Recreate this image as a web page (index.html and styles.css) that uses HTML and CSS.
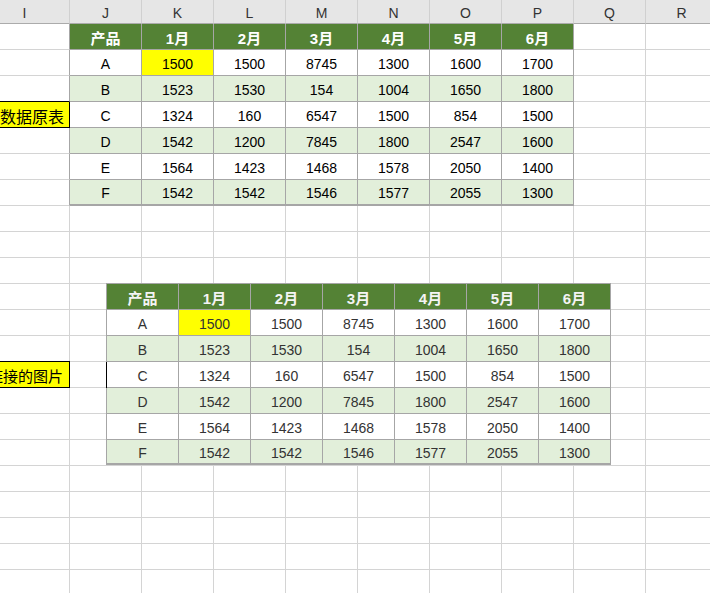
FILE: index.html
```html
<!DOCTYPE html>
<html lang="zh-CN">
<head>
<meta charset="utf-8">
<title>数据原表</title>
<link rel="stylesheet" href="styles.css">
</head>
<body>
<div class="sheet">
  <div class="row colhead">
    <div class="c first">I</div><div class="c">J</div><div class="c">K</div><div class="c">L</div><div class="c">M</div><div class="c">N</div><div class="c">O</div><div class="c">P</div><div class="c">Q</div><div class="c">R</div>
  </div>
  <div class="row">
    <div class="c edge"></div>
    <div class="c t th">产品</div><div class="c t th">1月</div><div class="c t th">2月</div><div class="c t th">3月</div><div class="c t th">4月</div><div class="c t th">5月</div><div class="c t th">6月</div>
    <div class="c"></div><div class="c"></div>
  </div>
  <div class="row">
    <div class="c edge"></div>
    <div class="c t">A</div><div class="c t hl">1500</div><div class="c t">1500</div><div class="c t">8745</div><div class="c t">1300</div><div class="c t">1600</div><div class="c t">1700</div>
    <div class="c"></div><div class="c"></div>
  </div>
  <div class="row">
    <div class="c edge lbl-top"></div>
    <div class="c t alt">B</div><div class="c t alt">1523</div><div class="c t alt">1530</div><div class="c t alt">154</div><div class="c t alt">1004</div><div class="c t alt">1650</div><div class="c t alt">1800</div>
    <div class="c"></div><div class="c"></div>
  </div>
  <div class="row">
    <div class="c label">数据原表</div>
    <div class="c t">C</div><div class="c t">1324</div><div class="c t">160</div><div class="c t">6547</div><div class="c t">1500</div><div class="c t">854</div><div class="c t">1500</div>
    <div class="c"></div><div class="c"></div>
  </div>
  <div class="row">
    <div class="c edge"></div>
    <div class="c t alt">D</div><div class="c t alt">1542</div><div class="c t alt">1200</div><div class="c t alt">7845</div><div class="c t alt">1800</div><div class="c t alt">2547</div><div class="c t alt">1600</div>
    <div class="c"></div><div class="c"></div>
  </div>
  <div class="row">
    <div class="c edge"></div>
    <div class="c t">E</div><div class="c t">1564</div><div class="c t">1423</div><div class="c t">1468</div><div class="c t">1578</div><div class="c t">2050</div><div class="c t">1400</div>
    <div class="c"></div><div class="c"></div>
  </div>
  <div class="row">
    <div class="c edge"></div>
    <div class="c t alt last">F</div><div class="c t alt last">1542</div><div class="c t alt last">1542</div><div class="c t alt last">1546</div><div class="c t alt last">1577</div><div class="c t alt last">2055</div><div class="c t alt last">1300</div>
    <div class="c"></div><div class="c"></div>
  </div>
  <div class="lower">
    <div class="c label label-lower">链接的图片</div>
  </div>

  <div class="pic">
    <div class="prow">
      <div class="c t th">产品</div><div class="c t th">1月</div><div class="c t th">2月</div><div class="c t th">3月</div><div class="c t th">4月</div><div class="c t th">5月</div><div class="c t th">6月</div>
    </div>
    <div class="prow">
      <div class="c t">A</div><div class="c t hl">1500</div><div class="c t">1500</div><div class="c t">8745</div><div class="c t">1300</div><div class="c t">1600</div><div class="c t">1700</div>
    </div>
    <div class="prow">
      <div class="c t alt">B</div><div class="c t alt">1523</div><div class="c t alt">1530</div><div class="c t alt">154</div><div class="c t alt">1004</div><div class="c t alt">1650</div><div class="c t alt">1800</div>
    </div>
    <div class="prow black-edge">
      <div class="c t">C</div><div class="c t">1324</div><div class="c t">160</div><div class="c t">6547</div><div class="c t">1500</div><div class="c t">854</div><div class="c t">1500</div>
    </div>
    <div class="prow">
      <div class="c t alt">D</div><div class="c t alt">1542</div><div class="c t alt">1200</div><div class="c t alt">7845</div><div class="c t alt">1800</div><div class="c t alt">2547</div><div class="c t alt">1600</div>
    </div>
    <div class="prow">
      <div class="c t">E</div><div class="c t">1564</div><div class="c t">1423</div><div class="c t">1468</div><div class="c t">1578</div><div class="c t">2050</div><div class="c t">1400</div>
    </div>
    <div class="prow prow-last">
      <div class="c t alt last">F</div><div class="c t alt last">1542</div><div class="c t alt last">1542</div><div class="c t alt last">1546</div><div class="c t alt last">1577</div><div class="c t alt last">2055</div><div class="c t alt last">1300</div>
    </div>
  </div>
</div>
</body>
</html>
```

FILE: styles.css
```css
* {
  box-sizing: border-box;
  margin: 0;
  padding: 0;
}

html,
body {
  width: 710px;
  height: 593px;
  overflow: hidden;
  background: #ffffff;
}

body {
  font-family: "Liberation Sans", "Noto Sans CJK SC", sans-serif;
  font-size: 14px;
  color: #000000;
}

.sheet {
  position: relative;
  width: 718px;
}

.row {
  display: grid;
  grid-template-columns: 70px repeat(9, 72px);
  height: 26px;
}

.c {
  display: flex;
  align-items: center;
  justify-content: center;
  padding-top: 2px;
  border-right: 1px solid #d4d4d4;
  border-bottom: 1px solid #d4d4d4;
  white-space: nowrap;
  overflow: hidden;
}

/* column letters */
.colhead {
  height: 24px;
  background: #e6e6e6;
}

.colhead .c {
  color: #333333;
  font-size: 14px;
  padding-top: 3px;
  border-right-color: #d0d0d0;
  border-bottom-color: #ababab;
}

.colhead .first {
  padding-right: 20px;
}

/* bordered table cells */
.t {
  border-right-color: #a6a6a6;
  border-bottom-color: #a6a6a6;
}

.th {
  background: #548235;
  color: #ffffff;
  font-weight: bold;
  font-size: 15px;
}

.alt {
  background: #e2efda;
}

.hl {
  background: #ffff00;
}

.last {
  border-bottom-width: 2px;
}

.edge {
  border-right-color: #a6a6a6;
}

.lbl-top {
  border-bottom-color: #000000;
}

.label {
  justify-content: flex-end;
  padding-right: 5px;
  background: #ffff00;
  border-right-color: #000000;
  border-bottom-color: #000000;
  font-family: "Noto Sans CJK SC", sans-serif;
  font-size: 16px;
}

/* empty area below the table, gridlines drawn as background */
.lower {
  display: grid;
  grid-template-columns: 70px repeat(9, 72px);
  grid-template-rows: repeat(15, 26px);
  background-image:
    linear-gradient(to right, transparent 71px, #d4d4d4 71px),
    linear-gradient(to bottom, transparent 25px, #d4d4d4 25px);
  background-size: 72px 100%, 100% 26px;
  background-position: -2px 0, 0 0;
}

.label-lower {
  grid-row: 7;
  grid-column: 1;
  padding-right: 6px;
  font-size: 15px;
  box-shadow: 0 -1px 0 #000000;
}

/* linked picture floating over the sheet */
.pic {
  position: absolute;
  left: 106px;
  top: 283px;
  border-top: 1px solid #a6a6a6;
  color: #333333;
  background: #ffffff;
}

.prow {
  display: grid;
  grid-template-columns: repeat(7, 72px);
  height: 26px;
  border-left: 1px solid #a6a6a6;
}

.prow.black-edge {
  border-left-color: #000000;
}

.prow-last {
  height: 25px;
}

.pic .th {
  color: #f4f4f4;
}
```
